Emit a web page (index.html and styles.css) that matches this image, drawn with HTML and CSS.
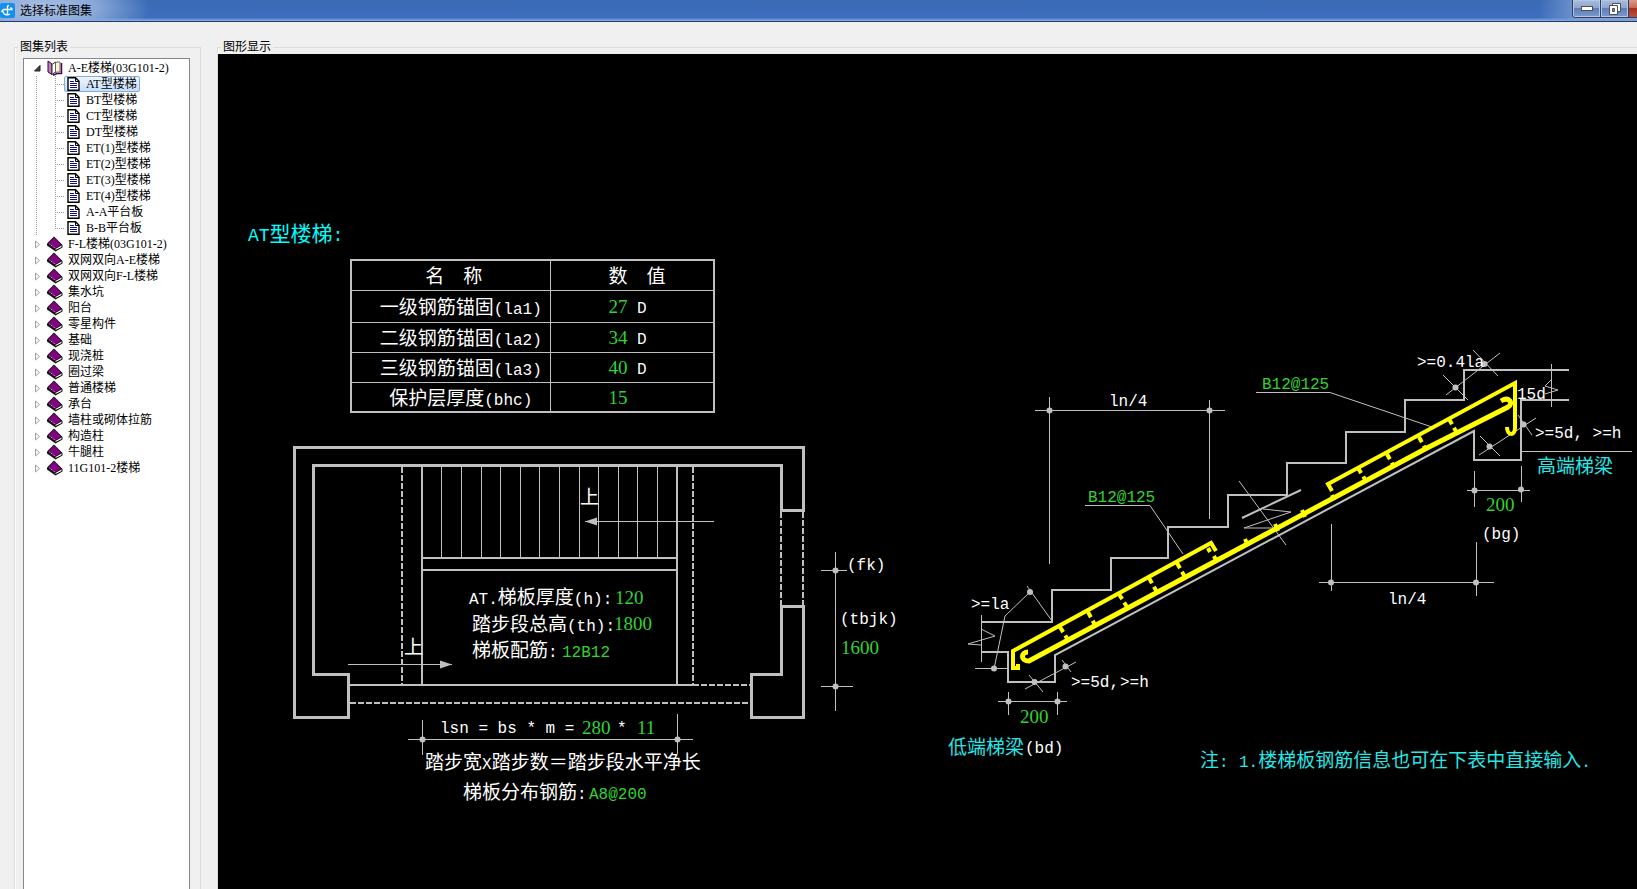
FILE: index.html
```html
<!DOCTYPE html>
<html lang="zh-CN">
<head>
<meta charset="utf-8">
<title>选择标准图集</title>
<link rel="stylesheet" href="styles.css">
</head>
<body>
<svg class="defs" aria-hidden="true">
  <symbol id="book" viewBox="0 0 16 16">
    <path d="M0 7.5 7 .5 15.500 9 15.500 11.500 8.500 15.500 0 9.500z" fill="#111"/>
    <path d="M1.500 7.500 7 1.500 14 8.500 8 12.500z" fill="#840084"/>
    <path d="M8.500 14 8.500 13 14.500 9.500 14.500 11z" fill="#fff"/>
    <path d="M2.500 8 8 12" stroke="#e6b8e6" stroke-dasharray="1 1" fill="none"/>
  </symbol>
  <symbol id="page" viewBox="0 0 13 14">
    <path d="M1 .8h7.500L12 4.300v9H1z" fill="#fff" stroke="#000" stroke-width="1.400"/>
    <path d="M8.500 1v3.500H12" fill="none" stroke="#000"/>
    <path d="M3 4.500h4M3 6.500h7M3 8.500h7M3 10.500h7" stroke="#10107c"/>
  </symbol>
  <symbol id="closed" viewBox="0 0 7 9">
    <path d="M1.500 1v7L5.500 4.500z" fill="#fff" stroke="#a0a0a0"/>
  </symbol>
</svg>

<header class="titlebar">
  <svg class="app-icon" viewBox="0 0 15 15" aria-hidden="true">
    <rect width="15" height="15" rx="2" fill="#1590ea"/>
    <path d="M7.500 11V3.500Q7.500 2.500 9 2.500M1.500 8.500 3.500 6.500H12.500M10.500 4.500 12.500 6.500M1.500 8.500 4 9M3.500 9.500C4 12 7.500 12.500 10 11" fill="none" stroke="#fff" stroke-width="1.300"/>
  </svg>
  <h1 class="title">选择标准图集</h1>
  <div class="controls">
    <button class="control" aria-label="最小化"><svg width="12" height="6" aria-hidden="true"><rect x=".5" y=".5" width="11" height="4" fill="#fff" stroke="#4a4f5e"/></svg></button>
    <button class="control" aria-label="还原"><svg width="12" height="12" aria-hidden="true"><path d="M3.500.5h8v8h-8z" fill="#fff" stroke="#4a4f5e"/><path d="M.5 2.500h8v9h-8z" fill="#fff" stroke="#4a4f5e"/><path d="M3.500 5.500h2v3h-2z" fill="#7f93b8" stroke="#4a4f5e"/></svg></button>
    <button class="control close" aria-label="关闭"></button>
  </div>
</header>

<main class="workspace">
  <fieldset class="group list-group">
    <legend>图集列表</legend>
    <ul class="tree">
      <li>
        <button class="node"><svg class="arrow" viewBox="0 0 7 9" aria-hidden="true"><path d="M6 1.500v5.500H.5z" fill="#404040" stroke="#222"/></svg><svg class="icon" viewBox="0 0 16 16" aria-hidden="true"><path d="M1 1 5 4V14.500L1 12z" fill="#c080c0" stroke="#300030"/><path d="M5 4.500 8.500 2V12L5 14.500z" fill="#fff" stroke="#333"/><path d="M8.500 3 10 2H13V12H9.500L8.500 13z" fill="#fff8c8" stroke="#666"/><path d="M14.500 3V13.500H10L6 15.300" fill="none" stroke="#500050" stroke-width="1.500"/></svg>A-E楼梯(03G101-2)</button>
        <ul class="children">
          <li><button class="leaf selected"><svg class="page" aria-hidden="true"><use href="#page"/></svg>AT型楼梯</button></li>
          <li><button class="leaf"><svg class="page" aria-hidden="true"><use href="#page"/></svg>BT型楼梯</button></li>
          <li><button class="leaf"><svg class="page" aria-hidden="true"><use href="#page"/></svg>CT型楼梯</button></li>
          <li><button class="leaf"><svg class="page" aria-hidden="true"><use href="#page"/></svg>DT型楼梯</button></li>
          <li><button class="leaf"><svg class="page" aria-hidden="true"><use href="#page"/></svg>ET(1)型楼梯</button></li>
          <li><button class="leaf"><svg class="page" aria-hidden="true"><use href="#page"/></svg>ET(2)型楼梯</button></li>
          <li><button class="leaf"><svg class="page" aria-hidden="true"><use href="#page"/></svg>ET(3)型楼梯</button></li>
          <li><button class="leaf"><svg class="page" aria-hidden="true"><use href="#page"/></svg>ET(4)型楼梯</button></li>
          <li><button class="leaf"><svg class="page" aria-hidden="true"><use href="#page"/></svg>A-A平台板</button></li>
          <li><button class="leaf"><svg class="page" aria-hidden="true"><use href="#page"/></svg>B-B平台板</button></li>
        </ul>
      </li>
      <li><button class="node"><svg class="arrow" aria-hidden="true"><use href="#closed"/></svg><svg class="icon" aria-hidden="true"><use href="#book"/></svg>F-L楼梯(03G101-2)</button></li>
      <li><button class="node"><svg class="arrow" aria-hidden="true"><use href="#closed"/></svg><svg class="icon" aria-hidden="true"><use href="#book"/></svg>双网双向A-E楼梯</button></li>
      <li><button class="node"><svg class="arrow" aria-hidden="true"><use href="#closed"/></svg><svg class="icon" aria-hidden="true"><use href="#book"/></svg>双网双向F-L楼梯</button></li>
      <li><button class="node"><svg class="arrow" aria-hidden="true"><use href="#closed"/></svg><svg class="icon" aria-hidden="true"><use href="#book"/></svg>集水坑</button></li>
      <li><button class="node"><svg class="arrow" aria-hidden="true"><use href="#closed"/></svg><svg class="icon" aria-hidden="true"><use href="#book"/></svg>阳台</button></li>
      <li><button class="node"><svg class="arrow" aria-hidden="true"><use href="#closed"/></svg><svg class="icon" aria-hidden="true"><use href="#book"/></svg>零星构件</button></li>
      <li><button class="node"><svg class="arrow" aria-hidden="true"><use href="#closed"/></svg><svg class="icon" aria-hidden="true"><use href="#book"/></svg>基础</button></li>
      <li><button class="node"><svg class="arrow" aria-hidden="true"><use href="#closed"/></svg><svg class="icon" aria-hidden="true"><use href="#book"/></svg>现浇桩</button></li>
      <li><button class="node"><svg class="arrow" aria-hidden="true"><use href="#closed"/></svg><svg class="icon" aria-hidden="true"><use href="#book"/></svg>圈过梁</button></li>
      <li><button class="node"><svg class="arrow" aria-hidden="true"><use href="#closed"/></svg><svg class="icon" aria-hidden="true"><use href="#book"/></svg>普通楼梯</button></li>
      <li><button class="node"><svg class="arrow" aria-hidden="true"><use href="#closed"/></svg><svg class="icon" aria-hidden="true"><use href="#book"/></svg>承台</button></li>
      <li><button class="node"><svg class="arrow" aria-hidden="true"><use href="#closed"/></svg><svg class="icon" aria-hidden="true"><use href="#book"/></svg>墙柱或砌体拉筋</button></li>
      <li><button class="node"><svg class="arrow" aria-hidden="true"><use href="#closed"/></svg><svg class="icon" aria-hidden="true"><use href="#book"/></svg>构造柱</button></li>
      <li><button class="node"><svg class="arrow" aria-hidden="true"><use href="#closed"/></svg><svg class="icon" aria-hidden="true"><use href="#book"/></svg>牛腿柱</button></li>
      <li><button class="node"><svg class="arrow" aria-hidden="true"><use href="#closed"/></svg><svg class="icon" aria-hidden="true"><use href="#book"/></svg>11G101-2楼梯</button></li>
    </ul>
  </fieldset>

  <fieldset class="group view-group">
    <legend>图形显示</legend>
    <div class="canvas">
      <svg class="drawing">
        <g transform="translate(-218 -54)">
          <!-- plan: walls -->
          <g class="wall">
            <path d="M803.500 510.500V447.500H294.500V717.500H348.500V674.500H313.500V465.500H781.500V510.500z"/>
            <path d="M781.500 606.500H803.500V717.500H751.500V674.500H781.500z"/>
          </g>
          <g class="edge">
            <path d="M422 467V685M677 467V685M422 558H677M422 570H677M349 685H693"/>
            <path class="dash" d="M402 467V685M693 467V685M693 685H751M350 703H750M781 512V605M803 512V605"/>
          </g>
          <!-- plan: treads, arrows and dimensions -->
          <g class="thin">
            <path d="M441.500 467V558M461.500 467V558M481.500 467V558M500.500 467V558M520.500 467V558M539.500 467V558M559.500 467V558M579.500 467V558M598.500 467V558M618.500 467V558M637.500 467V558M657.500 467V558"/>
            <path d="M585 521.500H714M348 664.500H452"/>
            <path d="M835.500 552V711M821 570.500H847M821 686.500H853"/>
            <path d="M422.500 720V755M677.500 714V754M408 739.500H693"/>
          </g>
          <g class="solid">
            <path d="M585 521.500 597 517.500V525.500zM452 664.500 440 660.500V668.500z"/>
            <circle cx="835.500" cy="570.500" r="3"/><circle cx="835.500" cy="686.500" r="3"/>
            <circle cx="422.500" cy="739.500" r="3"/><circle cx="677.500" cy="739.500" r="3"/>
          </g>
          <!-- section: concrete outline -->
          <g class="edge">
            <path d="M982 622H1052V590H1111V558H1168V527H1228V495H1287V463H1346V432H1405V400H1464V370H1569"/>
            <path d="M1569 400H1521V460H1474V431L1055 655V682H1008V652H982"/>
            <path d="M1242 518 1301 490"/>
          </g>
          <g class="thin">
            <path d="M981.500 615V662M981 629 995 636 968 644 981 645"/>
            <path d="M1052 621 1027 586M1030 592 1005 616 994 669M975 668.500H1008"/>
            <path d="M1025 689 1076 662M1029 675 1043 692M1062 660 1071 672"/>
            <path d="M998 701.500H1067M1008.500 692V715M1057.500 692V715"/>
            <path d="M1239 481 1286 545M1263 509 1291 512 1244 528 1274 528"/>
            <path d="M1049.500 397V564M1209.500 400V519M1035 410.500H1225"/>
            <path d="M1085 505.500H1150L1183 554M1256 392.500H1330L1432 427"/>
            <path d="M1473 350 1498 376M1446 395 1500 353M1443 375 1468 400"/>
            <path d="M1551.500 364V407M1551 380 1545 386 1558 390 1545 394"/>
            <path d="M1479 455 1536 418M1480 436 1500 456M1518 415 1532 435M1521 451.500H1632"/>
            <path d="M1467 490.500H1530M1474.500 471V507M1521.500 466V502"/>
            <path d="M1319 582.500H1494M1331.500 524V591M1476.500 542V596"/>
          </g>
          <g class="solid">
            <circle cx="1030" cy="592" r="3"/><circle cx="994" cy="668.500" r="3"/>
            <circle cx="1034.500" cy="682" r="3"/><circle cx="1065.500" cy="666.500" r="3"/>
            <circle cx="1008.500" cy="701.500" r="3"/><circle cx="1057.500" cy="701.500" r="3"/>
            <circle cx="1049.500" cy="410.500" r="3"/><circle cx="1209.500" cy="410.500" r="3"/>
            <circle cx="1484.500" cy="364" r="3"/><circle cx="1455.500" cy="387.500" r="3"/>
            <circle cx="1523.500" cy="424.500" r="3"/><circle cx="1489.500" cy="446.500" r="3"/>
            <circle cx="1474.500" cy="490.500" r="3"/><circle cx="1521" cy="489.500" r="3"/>
            <circle cx="1331" cy="582.500" r="3"/><circle cx="1476" cy="582.500" r="3"/>
          </g>
          <!-- section: labels the reinforcement passes over -->
          <g class="note">
            <text x="971" y="609">&gt;=la</text>
            <text x="1417" y="367">&gt;=0.4la</text>
            <text x="1517" y="399">15d</text>
          </g>
          <!-- section: reinforcement -->
          <g class="bar">
            <path class="main" d="M1028 652C1021 652 1020 661 1029 661L1070 639 1427 448 1508 407C1514 403 1509 396 1501 401"/>
            <path d="M1216 551 1211 543 1013 651V668H1018V664"/>
            <path d="M1332 491 1328 484 1515 383V428C1515 436 1507 436 1507 427"/>
            <path class="tie" d="M1060 627 1068 640M1088 612 1095 625M1119 594 1127 607M1149 578 1157 592M1177 563 1185 577M1358 468 1366 481M1387 454 1394 467M1419 437 1426 450M1449 419 1457 433"/>
            <path d="M1208 548 1210 552M1214 556 1217 562M1245 539 1248 546M1275 524 1278 531M1302 510 1305 517M1332 495 1334 500"/>
          </g>
          <!-- lettering -->
          <text class="head" x="248" y="241">AT<tspan class="zh">型楼梯</tspan>:</text>
          <g class="note">
            <text x="580" y="504"><tspan class="zh">上</tspan></text>
            <text x="404" y="654"><tspan class="zh">上</tspan></text>
            <text x="469" y="604">AT.<tspan class="zh">梯板厚度</tspan>(h):</text>
            <text x="472" y="631"><tspan class="zh">踏步段总高</tspan>(th):</text>
            <text x="472" y="657"><tspan class="zh">梯板配筋</tspan>:</text>
            <text x="847" y="570">(fk)</text>
            <text x="840" y="624">(tbjk)</text>
            <text x="440" y="733">lsn = bs * m =</text>
            <text x="617" y="733">*</text>
            <text x="425" y="769"><tspan class="zh">踏步宽</tspan>X<tspan class="zh">踏步数＝踏步段水平净长</tspan></text>
            <text x="463" y="799"><tspan class="zh">梯板分布钢筋</tspan>:</text>
            <text x="1025" y="753">(bd)</text>
            <text x="1071" y="687">&gt;=5d,</text>
            <text x="1120" y="687">&gt;=h</text>
            <text x="1109" y="406">ln/4</text>
            <text x="1388" y="604">ln/4</text>
            <text x="1535" y="438">&gt;=5d, &gt;=h</text>
            <text x="1482" y="539">(bg)</text>
          </g>
          <g class="value">
            <text class="num" x="615" y="604">120</text>
            <text class="num" x="614" y="630">1800</text>
            <text x="562" y="657">12B12</text>
            <text class="num" x="841" y="654">1600</text>
            <text class="num" x="582" y="734">280</text>
            <text class="num" x="637" y="734">11</text>
            <text x="589" y="799">A8@200</text>
            <text class="num" x="1020" y="723">200</text>
            <text x="1088" y="502">B12@125</text>
            <text x="1262" y="389">B12@125</text>
            <text class="num" x="1486" y="511">200</text>
          </g>
          <g class="label">
            <text x="948" y="754"><tspan class="zh">低端梯梁</tspan></text>
            <text x="1537" y="473"><tspan class="zh">高端梯梁</tspan></text>
            <text x="1200" y="767"><tspan class="zh">注</tspan>:</text>
            <text x="1239" y="767">1.<tspan class="zh">楼梯板钢筋信息也可在下表中直接输入</tspan>.</text>
          </g>
        </g>
      </svg>
      <table class="params">
        <thead>
          <tr><th scope="col"><span class="zh">名　称</span></th><th scope="col"><span class="zh">数　值</span></th></tr>
        </thead>
        <tbody>
          <tr><td><span class="zh">一级钢筋锚固</span>(la1)</td><td><span class="num">27</span> D</td></tr>
          <tr><td><span class="zh">二级钢筋锚固</span>(la2)</td><td><span class="num">34</span> D</td></tr>
          <tr><td><span class="zh">三级钢筋锚固</span>(la3)</td><td><span class="num">40</span> D</td></tr>
          <tr><td><span class="zh">保护层厚度</span>(bhc)</td><td><span class="num">15</span></td></tr>
        </tbody>
      </table>
    </div>
  </fieldset>
</main>
</body>
</html>
```
FILE: styles.css
```css
* { box-sizing: border-box; }

body {
  margin: 0;
  height: 100vh;
  display: flex;
  flex-direction: column;
  overflow: hidden;
  background: #f0f0f0;
  color: #000;
  font: 12px/16px "Liberation Serif", "Noto Sans CJK SC", serif;
}

ul { list-style: none; margin: 0; padding: 0; }

button {
  margin: 0;
  padding: 0;
  border: 0;
  background: none;
  color: inherit;
  font: inherit;
}

.defs { display: none; }

/* title bar */
.titlebar {
  flex: none;
  display: flex;
  align-items: flex-start;
  height: 22px;
  border-bottom: 1px solid #1f3a6b;
  background:
    radial-gradient(ellipse 110px 40px at 40px 8px, #a9bfe2 0, #8aa9d8 50%, transparent 100%),
    linear-gradient(to right, transparent 94%, #7f9fd2 97%),
    linear-gradient(#3b6ab5 0, #3d6fbe 85%, #8fb2e6 100%);
}
.app-icon { width: 15px; height: 15px; margin-top: 3px; }
.title {
  flex: 1;
  margin: 1px 0 0 5px;
  font: 12px/17px "Noto Sans CJK SC", sans-serif;
}
.controls {
  display: flex;
  height: 18px;
  border: 1px solid #2c3f66;
  border-width: 0 0 1px 1px;
  border-radius: 0 0 0 4px;
  overflow: hidden;
}
.control {
  display: flex;
  align-items: center;
  justify-content: center;
  width: 28px;
  border-right: 1px solid #2c3f66;
  background: linear-gradient(#a9bcda 0, #8ea6cf 45%, #5f7fb6 50%, #7b9bce 100%);
  box-shadow: inset 0 0 0 1px #b4c6e4;
}
.control.close {
  width: 8px;
  border: 0;
  background: linear-gradient(#d99a8c 0, #c86a55 45%, #a83020 50%, #b85040 100%);
  box-shadow: none;
}

/* panels */
.workspace {
  flex: 1;
  display: flex;
  gap: 16px;
  min-height: 0;
  padding: 18px 0 0 14px;
}
.group {
  display: flex;
  margin: 0;
  padding: 0;
  min-width: 0;
  border: 1px solid #dcdcdc;
  border-bottom: 0;
  box-shadow: inset 1px 0 #fff;
}
.group legend {
  padding: 0 2px;
  font-size: 12px;
  line-height: 14px;
}
.list-group { flex: none; width: 187px; padding: 4px 10px 0 8px; }
.list-group legend { margin-left: -5px; }
.view-group { flex: 1; border-right: 0; }
.view-group legend { margin-left: 3px; }

/* tree */
.tree {
  flex: 1;
  padding-top: 1px;
  border: 1px solid #828790;
  border-bottom: 0;
  background: #fff;
}
.node {
  display: flex;
  align-items: center;
  height: 16px;
  padding-left: 10px;
  white-space: nowrap;
}
.arrow { width: 7px; height: 9px; margin-right: 6px; }
.icon { width: 16px; height: 16px; margin-right: 5px; }
.children {
  padding-left: 31px;
  background: repeating-linear-gradient(#999 0 1px, transparent 1px 2px) 12px 0 / 1px 100% no-repeat;
}
.children li {
  display: flex;
  padding-left: 9px;
  background:
    repeating-linear-gradient(#999 0 1px, transparent 1px 2px) 0 0 / 1px 100% no-repeat,
    repeating-linear-gradient(to right, #999 0 1px, transparent 1px 2px) 0 8px / 10px 1px no-repeat;
}
.children li:last-child { background-size: 1px 50%, 10px 1px; }
.leaf {
  display: flex;
  align-items: center;
  height: 16px;
  padding: 0 2px;
  border: 1px solid transparent;
  border-radius: 2px;
  white-space: nowrap;
}
.leaf.selected {
  border-color: #84acdd;
  background: linear-gradient(#eef5fe, #c6dffb);
}
.page { width: 13px; height: 14px; margin-right: 6px; }

/* drawing area */
.canvas {
  flex: 1;
  position: relative;
  overflow: hidden;
  background: #000;
}
.drawing { display: block; width: 100%; height: 100%; }
.drawing text, .params { font: 16px "Liberation Mono", monospace; white-space: pre; }
.drawing .zh, .params .zh { font: 19px "Noto Sans CJK SC", sans-serif; }
.drawing .num, .params .num { font: 19px "Liberation Serif", serif; }
.drawing .head { font-size: 18px; fill: #0ff; }
.drawing .head .zh { font-size: 21px; }

.wall { fill: none; stroke: #c0c0c0; stroke-width: 3; }
.edge { fill: none; stroke: #c0c0c0; stroke-width: 2; }
.thin { fill: none; stroke: #c0c0c0; stroke-width: 1; }
.dash { stroke-dasharray: 6 2; }
.solid { fill: #c0c0c0; }
.bar { fill: none; stroke: #ff0; stroke-width: 4; }
.main { stroke-width: 5; }
.tie { stroke-dasharray: 6 4; }
.note { fill: #fff; }
.value { fill: #32d232; }
.label { fill: #28e6e6; }

.params {
  position: absolute;
  left: 132px;
  top: 205px;
  width: 365px;
  border-collapse: collapse;
  border: 2px solid #c0c0c0;
  color: #fff;
}
.params th, .params td {
  height: 30px;
  padding: 4px 0 0;
  border: 1px solid #c0c0c0;
  font-weight: 400;
  line-height: 20px;
}
.params tbody tr:first-child td { height: 32px; }
.params .zh, .params .num { line-height: 20px; }
.params th:first-child { width: 199px; padding-left: 6px; }
.params td:first-child { padding-left: 20px; text-align: center; }
.params th:last-child, .params td:last-child { padding-left: 58px; text-align: left; }
.params .num { color: #32d232; }
```
